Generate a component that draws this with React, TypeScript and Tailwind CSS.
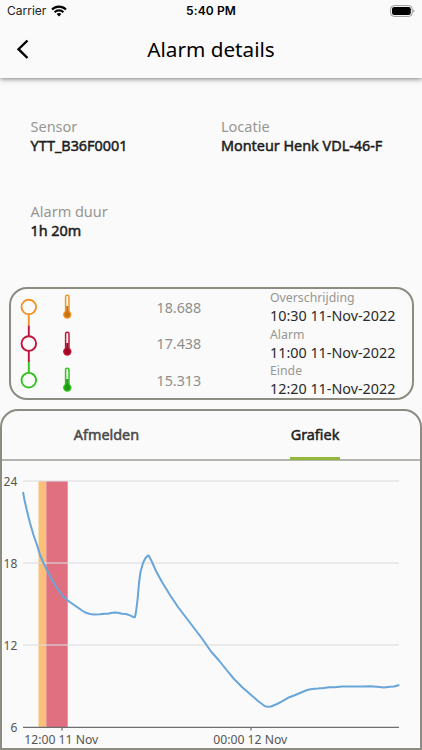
// Alarm details screen: sensor info, alarm timeline and temperature chart

import clsx from 'clsx'

const events = [
  { label: 'Overschrijding', time: '10:30 11-Nov-2022', value: '18.688', color: '#f0952a', dark: '#c9720f' },
  { label: 'Alarm', time: '11:00 11-Nov-2022', value: '17.438', color: '#c2143a', dark: '#9c0a26' },
  { label: 'Einde', time: '12:20 11-Nov-2022', value: '15.313', color: '#2fc41c', dark: '#1f9a12' },
]

const yTicks = [
  { value: '24', y: 20 },
  { value: '18', y: 102 },
  { value: '12', y: 184 },
  { value: '6', y: 266 },
]

const series =
  '21,31 22.5,39 25,50 28,62 31.5,74 35,84 38,94 41,101 45,109 49,117 53,124 57,130 61,135 65,139 70,142.5 75,146 80,149.5 84,151.8 88,153 92,153.4 98,153.3 102,152.8 106,152.7 109,152 113,151.6 116,151.7 120,152.7 124,153 128,154.4 132,156.4 133,156 134,151 135.5,139 137,122 138.5,111 141,102 143.5,97 146,94.5 147,95 150,101 154,110 160,121 168,134 176,146 184,156.5 192,167 200,177.5 209,190.5 217,199.5 225,209.5 232,218 240,226 248,233 256,240 263,245.2 266,245.8 269,245.5 275,243 280,240.3 286,236.8 292,234.5 298,232 305,229 310,228 316,227.6 322,227 327,226.2 333,226.3 340,225.6 354,225.6 361,225.5 368,225.2 375,225.7 382,226.5 388,225.7 392,225.5 397.3,224'

function Field({ label, value, className }: { label: string; value: string; className?: string }) {
  return (
    <div className={clsx('text-[14.5px] leading-[19px]', className)}>
      <p className="text-[#979792]">{label}</p>
      <p className="text-[14.4px] tracking-[-0.01px] text-[#1e1e1e] [-webkit-text-stroke:0.5px_#1e1e1e]">{value}</p>
    </div>
  )
}

function Thermometer({ color, dark }: { color: string; dark: string }) {
  return (
    <svg width="10" height="26" viewBox="0 0 10 26" fill="none">
      <rect x="3.6" y="1.2" width="3.4" height="19" rx="1.6" stroke={color} strokeWidth="1.5" />
      <circle cx="5.3" cy="20.6" r="4.2" fill={color} />
      <path d="M5.3 12v8" stroke={dark} strokeWidth="2.2" />
      <circle cx="5.3" cy="20.6" r="2.8" fill={dark} />
    </svg>
  )
}

function Timeline() {
  return (
    <svg width="18" height="92" viewBox="0 0 18 92" fill="none" strokeWidth="1.9">
      <path d="M8.8 16v11.5" stroke={events[0].color} />
      <path d="M8.8 27.5v10.5M8.8 53v11" stroke={events[1].color} />
      <path d="M8.8 64v11" stroke={events[2].color} />
      {events.map((e, i) => (
        <circle key={e.label} cx="8.8" cy={9 + i * 36.6} r="7.3" stroke={e.color} />
      ))}
    </svg>
  )
}

function Chart() {
  return (
    <svg width="418" height="287" viewBox="0 0 418 287" className="block">
      <rect x="36.5" y="20" width="7.8" height="246" fill="#fabf78" />
      <rect x="44.3" y="20" width="21.4" height="246" fill="#e06f80" />
      {yTicks.slice(0, 3).map((t) => (
        <path key={t.value} d={`M21 ${t.y}H397`} stroke="#dedede" strokeOpacity="0.75" strokeWidth="1.6" />
      ))}
      <path d="M21 266.3H397M60 266v3.5M249 266v3.5" stroke="#6e6e6e" strokeWidth="1.2" />
      <polyline points={series} fill="none" stroke="#68a5d8" strokeWidth="2" strokeLinejoin="round" />
      <g fill="#555" fontSize="12">
        {yTicks.map((t) => (
          <text key={t.value} x="15.3" y={t.y + 5} textAnchor="end">{t.value}</text>
        ))}
        <text x="22.3" y="282.8" textLength="74" lengthAdjust="spacingAndGlyphs">12:00 11 Nov</text>
        <text x="211.3" y="282.8" textLength="74" lengthAdjust="spacingAndGlyphs">00:00 12 Nov</text>
      </g>
    </svg>
  )
}

export default function App() {
  return (
    <div className="flex h-[750px] w-[422px] flex-col overflow-hidden bg-[#fafafa] font-['Noto_Sans',sans-serif] text-black">
      <header className="h-[78px] shrink-0 shadow-[0_1px_5px_rgba(0,0,0,0.5)]">
        <div className="grid h-[22px] grid-cols-3 items-center px-[7px] font-['Inter',sans-serif]">
          <div className="flex items-center gap-[5px] text-xs text-[#222]">
            <span>Carrier</span>
            <svg width="16" height="12" viewBox="0 0 16 12" fill="none" stroke="#000" strokeWidth="2.1">
              <path d="M1 4.5a10 10 0 0 1 14 0M3.6 7.2a6.3 6.3 0 0 1 8.8 0" />
              <path d="M8 11.5 5.6 9.1a3.5 3.5 0 0 1 4.8 0Z" fill="#000" stroke="none" />
            </svg>
          </div>
          <span className="text-center text-xs font-semibold tracking-[0.1px]">5:40 PM</span>
          <svg className="justify-self-end" width="25" height="12" viewBox="0 0 25 12" fill="none">
            <rect x="0.6" y="0.6" width="21.6" height="10.8" rx="3.4" stroke="#999" />
            <rect x="2" y="2" width="18.8" height="8" rx="2.2" fill="#000" />
            <path d="M23.4 4.3c1.3.6 1.3 2.8 0 3.4Z" fill="#888" />
          </svg>
        </div>
        <div className="relative flex h-[55px] items-center justify-center">
          <button className="absolute left-4 top-[17px]">
            <svg width="14" height="20" viewBox="0 0 14 20" fill="none" stroke="#000" strokeWidth="2.4">
              <path d="M11.5 1.5 2.5 10.2l9 8.8" />
            </svg>
          </button>
          <h1 className="text-[20.7px]">Alarm details</h1>
        </div>
      </header>

      <section className="grid h-[209px] shrink-0 grid-cols-[190.5px_1fr] content-start gap-y-[47px] pl-[30.5px] pt-[39px]">
        <Field label="Sensor" value="YTT_B36F0001" />
        <Field label="Locatie" value="Monteur Henk VDL-46-F" />
        <Field label="Alarm duur" value="1h 20m" />
      </section>

      <section className="ml-[8.5px] flex h-[113px] w-[405px] shrink-0 rounded-[18px] border-2 border-[#8c8c82]">
        <div className="ml-[9.5px] mt-[9.4px] w-[34px]">
          <Timeline />
        </div>
        <div className="flex-1">
          {events.map((e) => (
            <div key={e.label} className="flex h-[36.6px]">
              <div className="w-[102.5px] pl-[7.5px] pt-[5px]">
                <Thermometer color={e.color} dark={e.dark} />
              </div>
              <div className="w-[104.5px] pt-[8.6px] text-[14.3px] leading-5 text-[#8f8f8a]">{e.value}</div>
              <div className="whitespace-nowrap pl-[9px]">
                <p className="text-[12.3px] leading-[18px] text-[#979792]">{e.label}</p>
                <p className="text-[14.35px] leading-[17px] text-[#2a2a2a]">{e.time}</p>
              </div>
            </div>
          ))}
        </div>
      </section>

      <section className="mt-[9px] h-[341px] shrink-0 rounded-t-[18px] border-2 border-[#8c8c82]">
        <nav className="grid h-[50px] grid-cols-2 border-b-2 border-[#b4b4b0] text-[14.4px]">
          <button className="pb-px text-[#494949] [-webkit-text-stroke:0.5px_#494949]">Afmelden</button>
          <button className="relative pb-px pr-px text-[#1e1e1e] [-webkit-text-stroke:0.5px_#1e1e1e]">
            Grafiek
            <span className="absolute -bottom-px left-[calc(50%-0.5px)] h-[3px] w-[50px] -translate-x-1/2 bg-[#94b63a]" />
          </button>
        </nav>
        <Chart />
      </section>
    </div>
  )
}
